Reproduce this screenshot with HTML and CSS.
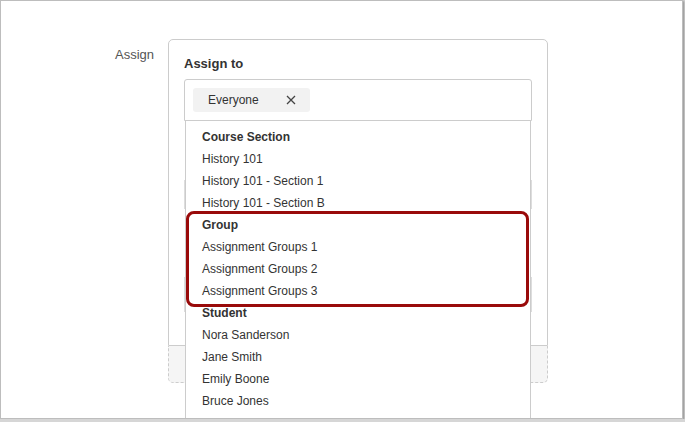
FILE: index.html
```html
<!DOCTYPE html>
<html>
<head>
	<title>Assign to</title>
	<link rel="stylesheet" href="styles.css">
</head>
<body>
	<div class="window">
		<div class="row">
			<div class="row-label">Assign</div>
			<div class="assign">
				<div class="card">
					<h2>Assign to</h2>
					<div class="field">
						<div class="input">
							<span class="chip">Everyone
								<svg class="chip-x" width="10" height="10" viewBox="0 0 10 10"><path d="M1 1L9 9M9 1L1 9" stroke="#444" stroke-width="1.3" fill="none"/></svg>
							</span>
						</div>
						<ul class="menu">
							<li class="heading">Course Section</li>
							<li>History 101</li>
							<li>History 101 - Section 1</li>
							<li>History 101 - Section B</li>
							<li class="highlight">
								<ul>
									<li class="heading">Group</li>
									<li>Assignment Groups 1</li>
									<li>Assignment Groups 2</li>
									<li>Assignment Groups 3</li>
								</ul>
							</li>
							<li class="heading">Student</li>
							<li>Nora Sanderson</li>
							<li>Jane Smith</li>
							<li>Emily Boone</li>
							<li>Bruce Jones</li>
						</ul>
					</div>
					<div class="inner first"></div>
					<div class="inner second"></div>
				</div>
				<div class="card-footer"></div>
			</div>
		</div>
	</div>
</body>
</html>
```

FILE: styles.css
```css
body {
	margin: 0;
	padding: 0;
	font-family: "Liberation Sans", Arial, sans-serif;
	background-color: #d6d6d6;
}
.window {
	box-sizing: border-box;
	width: 683px;
	height: 419px;
	background-color: white;
	border: 1px solid #bdbdbd;
	box-shadow: 1px 1px 2px rgba(0,0,0,.35);
	overflow: hidden;
}
.row {
	display: flex;
	padding-top: 38px;
}
.row-label {
	width: 153px;
	padding-top: 8px;
	text-align: right;
	font-size: 13px;
	color: #555;
}
.assign {
	margin-left: 14px;
	width: 380px;
}
.card {
	box-sizing: border-box;
	height: 307px;
	padding: 16px 15px 15px;
	border: 1px solid #ccc;
	border-radius: 5px 5px 0 0;
}
.card-footer {
	box-sizing: border-box;
	height: 37px;
	background-color: #f5f5f5;
	border: 1px dashed #ccc;
	border-top: 0;
	border-radius: 0 0 5px 5px;
}
h2 {
	margin: 0 0 7px;
	font-size: 13px;
	line-height: 16px;
	color: #333;
}
.field {
	position: relative;
	z-index: 2;
}
.input {
	padding: 8px;
	border: 1px solid #ccc;
	border-radius: 3px 3px 0 0;
}
.chip {
	display: inline-flex;
	align-items: center;
	height: 24px;
	width: 117px;
	box-sizing: border-box;
	padding-left: 15px;
	font-size: 12px;
	color: #333;
	background-color: #f2f2f2;
	border-radius: 3px;
}
.chip-x {
	margin-left: 27px;
}
.menu {
	position: absolute;
	top: 100%;
	left: 1px;
	right: 1px;
	margin: 0;
	padding: 5px 0 20px;
	list-style: none;
	background-color: white;
	border: 1px solid #ccc;
	border-top: 0;
}
.menu ul {
	margin: 0;
	padding: 0;
	list-style: none;
}
.menu li {
	padding-left: 16px;
	font-size: 12px;
	line-height: 22px;
	color: #333;
}
.menu li.highlight {
	position: relative;
	padding-left: 0;
}
.menu li.highlight::after {
	content: "";
	position: absolute;
	top: -3px;
	bottom: -5px;
	left: 0;
	right: 1px;
	border: 3px solid #990a0a;
	border-radius: 8px;
}
.menu .heading {
	font-weight: bold;
}
.inner {
	border: 1px solid #ddd;
}
.inner.first {
	margin-top: 59px;
	height: 27px;
}
.inner.second {
	margin-top: 68px;
	height: 33px;
}
```
